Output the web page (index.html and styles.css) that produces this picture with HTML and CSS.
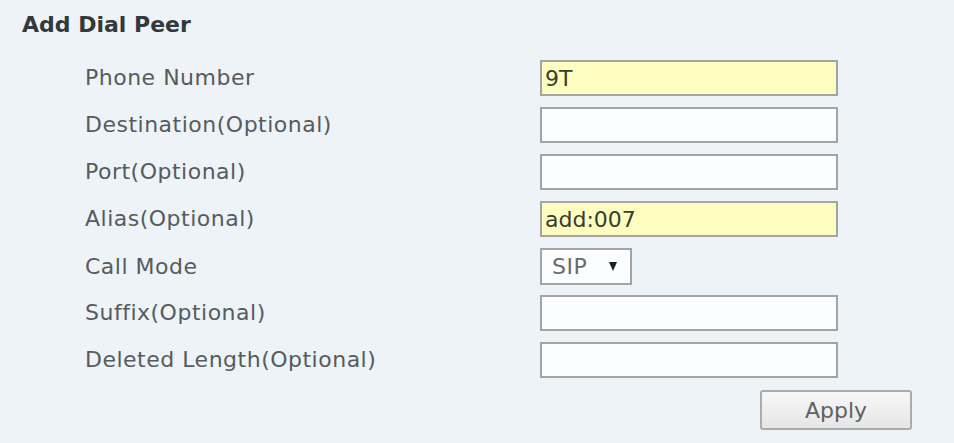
FILE: index.html
```html
<!DOCTYPE html>
<html lang="en">
<head>
<meta charset="utf-8">
<title>Add Dial Peer</title>
<link rel="stylesheet" href="styles.css">
</head>
<body>
<div class="page">
  <h2 class="title">Add Dial Peer</h2>
  <form class="form">
    <div class="row">
      <label class="label">Phone Number</label>
      <input class="field filled" type="text" value="9T">
    </div>
    <div class="row">
      <label class="label">Destination(Optional)</label>
      <input class="field" type="text" value="">
    </div>
    <div class="row">
      <label class="label">Port(Optional)</label>
      <input class="field" type="text" value="">
    </div>
    <div class="row">
      <label class="label">Alias(Optional)</label>
      <input class="field filled" type="text" value="add:007">
    </div>
    <div class="row">
      <label class="label">Call Mode</label>
      <div class="select"><span class="select-value">SIP</span><span class="caret"></span></div>
    </div>
    <div class="row">
      <label class="label">Suffix(Optional)</label>
      <input class="field" type="text" value="">
    </div>
    <div class="row">
      <label class="label">Deleted Length(Optional)</label>
      <input class="field" type="text" value="">
    </div>
    <div class="actions">
      <button class="button" type="button">Apply</button>
    </div>
  </form>
</div>
</body>
</html>
```

FILE: styles.css
```css
html, body {
  margin: 0;
  padding: 0;
}

body {
  background: #edf3f6;
  font-family: "DejaVu Sans", "Noto Sans", sans-serif;
  width: 954px;
  height: 443px;
  overflow: hidden;
}

.page {
  padding: 12px 0 0 22px;
}

.title {
  margin: 0;
  font-size: 22px;
  font-weight: bold;
  line-height: 26px;
  color: #33383b;
}

.form {
  display: flex;
  flex-direction: column;
  gap: 11px;
  margin: 22px 0 0 63px;
}

.row {
  display: grid;
  grid-template-columns: 455px 298px;
  align-items: center;
  height: 36px;
}

.label {
  font-size: 22px;
  letter-spacing: 0.5px;
  color: #575b5e;
  line-height: 26px;
}

.field {
  box-sizing: border-box;
  width: 298px;
  height: 36px;
  margin: 0;
  padding: 0 3px;
  border: 2px solid #a2a4a5;
  background: #fbfdfe;
  font-family: "DejaVu Sans", "Noto Sans", sans-serif;
  font-size: 22px;
  color: #3a3d30;
  outline: none;
}

.field.filled {
  background: #fdfdbf;
}

.select {
  box-sizing: border-box;
  width: 92px;
  height: 37px;
  border: 2px solid #a2a4a5;
  background: #fbfdfe;
  display: flex;
  align-items: center;
  padding-left: 10px;
}

.select-value {
  font-size: 22px;
  color: #686b6d;
  letter-spacing: 0.5px;
}

.caret {
  margin-left: 22px;
  width: 0;
  height: 0;
  border-left: 4px solid transparent;
  border-right: 4px solid transparent;
  border-top: 9px solid #1e1e1e;
}

.actions {
  display: flex;
  margin-top: 1px;
  padding-left: 675px;
}

.button {
  box-sizing: border-box;
  width: 152px;
  height: 40px;
  border: 2px solid #a9abac;
  border-radius: 3px;
  background: linear-gradient(#f7f7f7, #e6e6e6);
  font-family: "DejaVu Sans", "Noto Sans", sans-serif;
  font-size: 22px;
  color: #5e6163;
  padding: 0;
}
```
